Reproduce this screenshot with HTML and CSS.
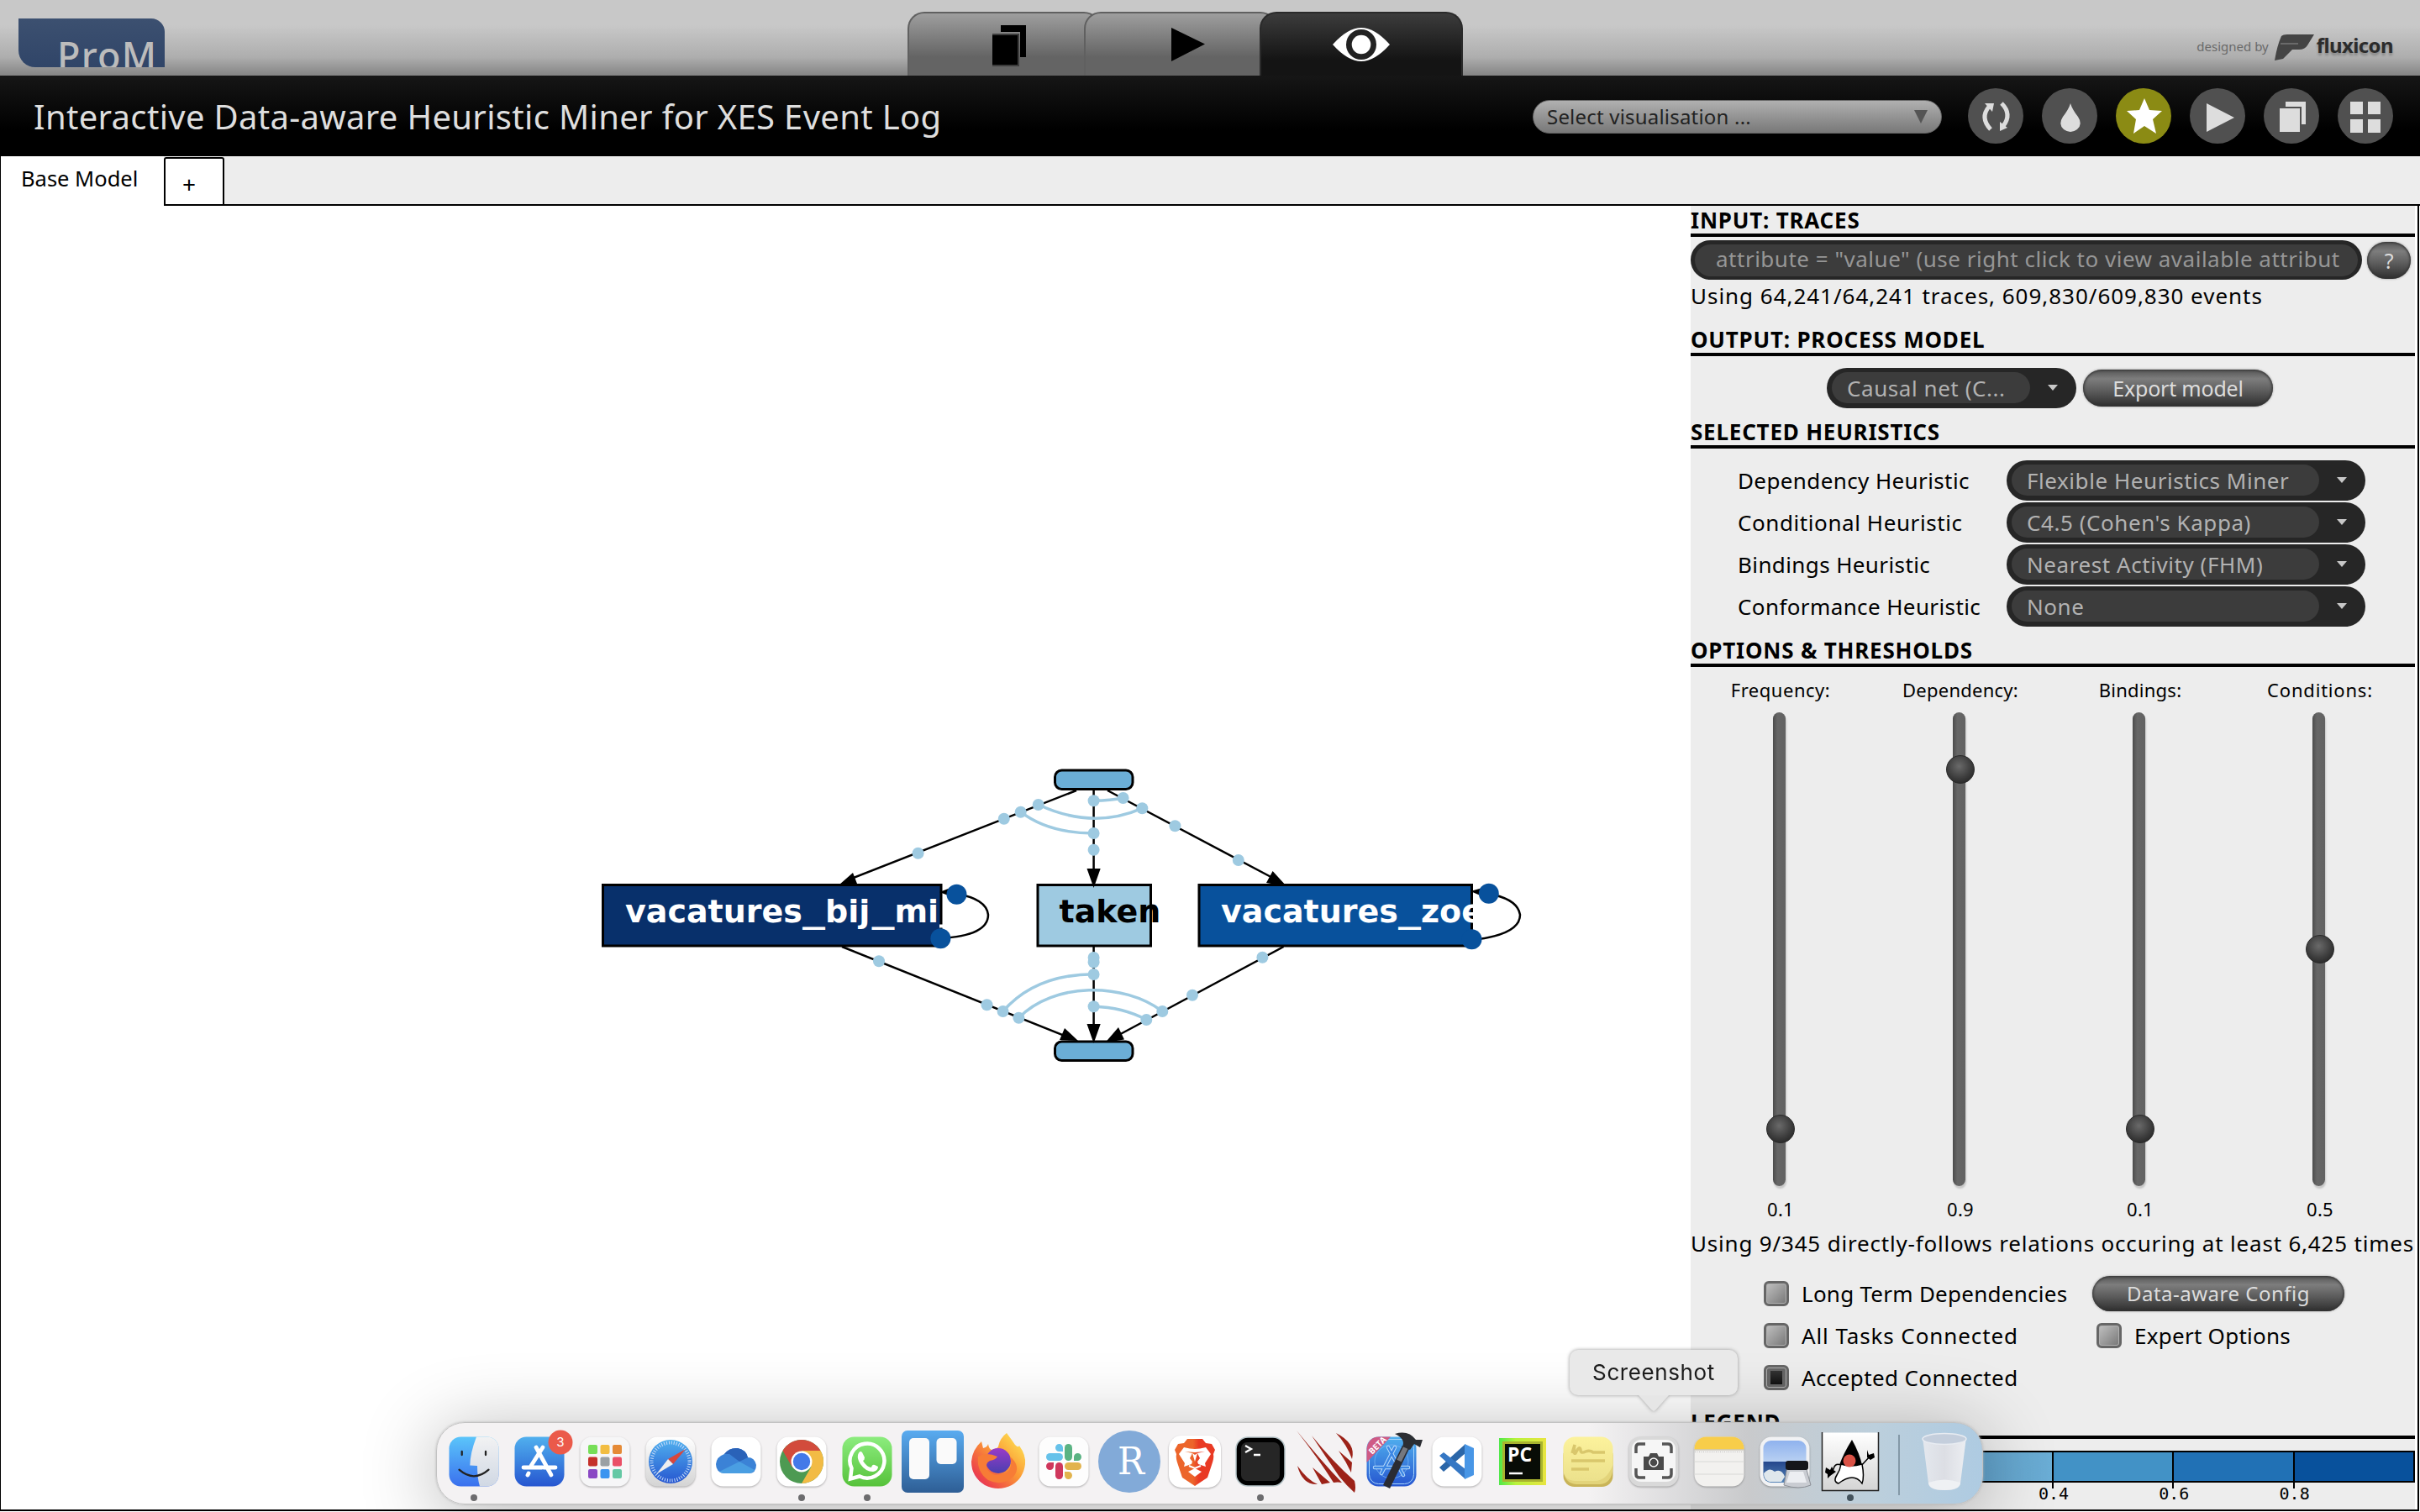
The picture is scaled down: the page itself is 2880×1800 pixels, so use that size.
FILE: index.html
```html
<!DOCTYPE html>
<html lang="en">
<head>
<meta charset="utf-8">
<title>ProM</title>
<link rel="stylesheet" href="styles.css">
</head>
<body>
<header class="topbar">
  <div class="logo"><span>ProM</span></div>
  <nav class="views">
    <div class="view"><svg width="44" height="50" viewBox="0 0 44 50"><path d="M12 1h30v38h-7V9H12z"/><path d="M2 11h32v39H2z" fill="#3c3c3c"/><path d="M2 13h30v35H2z"/></svg></div>
    <div class="view view-play"><svg width="42" height="42" viewBox="0 0 42 42"><path d="M1 1L41 20.500L1 41z"/></svg></div>
    <div class="view view-active"><svg width="70" height="44" viewBox="-35 -22 70 44"><path d="M-34 0Q-16-20 0-20Q16-20 34 0Q16 20 0 20Q-16 20-34 0z" fill="#fff"/><circle r="18" fill="#222"/><circle r="11.300" fill="#fff"/></svg></div>
  </nav>
  <div class="credit">
    <span class="credit-by">designed by</span>
    <svg width="50" height="34" viewBox="0 0 50 34"><path d="M9 3Q11 1 16 1H48L40 14Q37 19 30 19H22L11 30L1 32Q4 14 9 3z" fill="#444"/><path d="M8 12H29" stroke="#777" stroke-width="1.500"/></svg>
    <span class="credit-name">fluxicon</span>
  </div>
</header>
<div class="titlebar">
  <h1>Interactive Data-aware Heuristic Miner for XES Event Log</h1>
  <div class="vis-select"><span>Select visualisation ...</span><svg width="16" height="16" viewBox="0 0 16 16"><path d="M0 0H16L8 16z" fill="#555"/></svg></div>
  <div class="actions">
    <div class="round"><svg viewBox="-33 -33 66 66"><g fill="none" stroke="#ddd" stroke-width="5"><path d="M-6 16Q-19 2-8-11"/><path d="M7-15Q20-2 9 12"/></g><path d="M-13-15L-2-15L-4-5zM5 18L5 7L14 14z" fill="#ddd"/></svg></div>
    <div class="round"><svg viewBox="-33 -33 66 66"><path d="M1-15Q3-8 10 1Q16 10 9 16Q1 22-7 16Q-14 10-8 1Q-1-8 1-15z" fill="#ddd"/></svg></div>
    <div class="round round-star"><svg viewBox="-33 -33 66 66"><path d="M1-21L7-7L22-6L11 4L15 21L1 12L-12 21L-9 4L-20-6L-5-7z" fill="#fff"/></svg></div>
    <div class="round"><svg viewBox="-33 -33 66 66"><path d="M-13-15L20 2L-13 19z" fill="#ddd"/></svg></div>
    <div class="round"><svg viewBox="-33 -33 66 66"><path d="M-7-17H17V10H12V-11H-7z" fill="#ddd"/><path d="M-14-9H10V19H-14z" fill="#ddd"/></svg></div>
    <div class="round"><svg viewBox="-33 -33 66 66"><path d="M-18-17H-3V-2H-18zM3-17H18V-2H3zM-18 4H-3V20H-18zM3 4H18V20H3z" fill="#ddd"/></svg></div>
  </div>
</div>
<div class="tabs">
  <div class="tab tab-base">Base Model</div>
  <div class="tab tab-add">+</div>
  <div class="tab-fill"></div>
</div>
<main class="workspace">
  <svg class="graph" viewBox="1 245 2011 1552">
    <g fill="none" stroke="#000" stroke-width="2.500">
      <path d="M1281 941L1008 1048M1002 1127L1272 1235M1301.600 941V1045M1301.600 1127V1230M1318 941L1522 1049M1527.600 1127L1326 1235"/>
    </g>
    <g fill="#6baed6" stroke="#000" stroke-width="3">
      <rect x="1255.500" y="917" width="92.500" height="22.500" rx="8"/>
      <rect x="1255.500" y="1240" width="92.500" height="22.500" rx="8"/>
    </g>
    <g stroke="#000" stroke-width="3">
      <rect x="717.500" y="1053.500" width="402.500" height="72.500" fill="#08306b"/>
      <rect x="1235" y="1053.500" width="134.500" height="72.500" fill="#9ecae1"/>
      <rect x="1427" y="1053.500" width="324.500" height="72.500" fill="#08519c"/>
    </g>
    <path d="M999 1053L1015 1039L1020 1052zM1283 1239L1267 1224L1261 1238zM1301.600 1057L1293.500 1034H1309.700zM1301.600 1242L1293.500 1219H1309.700zM1531 1055L1514.600 1037L1507 1051zM1315.500 1241L1331 1223L1338 1237.500z"/>
    <g class="node-label">
      <text y="1098" fill="#fff"><tspan x="744">vacatures</tspan><tspan x="955" textLength="27" lengthAdjust="spacingAndGlyphs">_</tspan><tspan x="982">bij</tspan><tspan x="1037.500" textLength="27" lengthAdjust="spacingAndGlyphs">_</tspan><tspan x="1064.500">mi</tspan></text>
      <text x="1260.500" y="1098">taken</text>
      <text y="1098" fill="#fff"><tspan x="1453">vacatures</tspan><tspan x="1664" textLength="27" lengthAdjust="spacingAndGlyphs">_</tspan><tspan x="1691">zoe</tspan></text>
    </g>
    <path d="M1118 1100.500h5v4h-5z" fill="#fff"/>
    <g fill="none" stroke="#000" stroke-width="2.500">
      <path d="M1119 1117Q1176 1114 1176 1089Q1174 1070 1138 1064M1751 1119Q1809 1113 1809 1089Q1806 1070 1771 1064"/>
    </g>
    <path d="M1118 1062L1131 1057V1067zM1750 1061L1764 1057V1067z"/>
    <g fill="none" stroke="#9ecae1" stroke-width="3.500">
      <path d="M1236 958Q1300 988 1359 962.300M1214.700 966.700Q1248 992 1301.600 992M1301.600 953.300Q1322 953 1336.600 950"/>
      <path d="M1193.600 1204Q1232 1160 1301.600 1159.700M1212.400 1211.700C1254 1169 1337 1169 1383.300 1204M1301.600 1198.300Q1336 1199 1364.300 1214"/>
    </g>
    <g fill="#9ecae1">
      <circle cx="1235.700" cy="958" r="7"/><circle cx="1214.700" cy="966.700" r="7"/><circle cx="1194.800" cy="974.700" r="7"/><circle cx="1092.600" cy="1015.700" r="7"/>
      <circle cx="1046" cy="1144.300" r="7"/><circle cx="1174.500" cy="1196.300" r="7"/><circle cx="1193.600" cy="1204" r="7"/><circle cx="1212.400" cy="1211.700" r="7"/>
      <circle cx="1301.600" cy="953.300" r="7"/><circle cx="1301.600" cy="992" r="7"/><circle cx="1301.600" cy="1011.700" r="7"/>
      <circle cx="1301.600" cy="1140" r="7"/><circle cx="1301.600" cy="1145.500" r="7"/><circle cx="1301.600" cy="1160" r="7"/><circle cx="1301.600" cy="1198.300" r="7"/>
      <circle cx="1336.600" cy="950" r="7"/><circle cx="1359.300" cy="962.300" r="7"/><circle cx="1398.400" cy="983.300" r="7"/><circle cx="1473.800" cy="1024" r="7"/>
      <circle cx="1502.400" cy="1139.700" r="7"/><circle cx="1419" cy="1184.700" r="7"/><circle cx="1383.300" cy="1204" r="7"/><circle cx="1364.300" cy="1214" r="7"/>
    </g>
    <g fill="#08519c">
      <circle cx="1119.400" cy="1117.300" r="12"/><circle cx="1138.500" cy="1064.700" r="12"/><circle cx="1751.500" cy="1118.300" r="12"/><circle cx="1771.800" cy="1063.700" r="12"/>
    </g>
  </svg>
  <aside class="panel">
    <h2 class="heading">INPUT: TRACES</h2>
    <div class="filter-row">
      <div class="filter"><span>attribute = "value" (use right click to view available attribut</span></div>
      <div class="btn btn-help">?</div>
    </div>
    <p class="info info-traces">Using 64,241/64,241 traces, 609,830/609,830 events</p>
    <h2 class="heading heading-output">OUTPUT: PROCESS MODEL</h2>
    <div class="output-row">
      <div class="combo combo-output"><span class="combo-value">Causal net (C...</span><i class="arrow"></i></div>
      <div class="btn btn-export">Export model</div>
    </div>
    <h2 class="heading heading-next">SELECTED HEURISTICS</h2>
    <div class="heuristics">
      <span class="ls-a">Dependency Heuristic</span><div class="combo"><span class="combo-value">Flexible Heuristics Miner</span><i class="arrow"></i></div>
      <span class="ls-b">Conditional Heuristic</span><div class="combo"><span class="combo-value">C4.5 (Cohen's Kappa)</span><i class="arrow"></i></div>
      <span class="ls-a">Bindings Heuristic</span><div class="combo"><span class="combo-value">Nearest Activity (FHM)</span><i class="arrow"></i></div>
      <span class="ls-a">Conformance Heuristic</span><div class="combo"><span class="combo-value">None</span><i class="arrow"></i></div>
    </div>
    <h2 class="heading heading-next">OPTIONS &amp; THRESHOLDS</h2>
    <div class="sliders">
      <div class="slider"><span class="ls-b">Frequency:</span><div class="track"><i class="knob" style="top:479px"></i></div><span>0.1</span></div>
      <div class="slider"><span>Dependency:</span><div class="track"><i class="knob" style="top:51px"></i></div><span>0.9</span></div>
      <div class="slider"><span>Bindings:</span><div class="track"><i class="knob" style="top:479px"></i></div><span>0.1</span></div>
      <div class="slider"><span class="ls-c">Conditions:</span><div class="track"><i class="knob" style="top:265px"></i></div><span>0.5</span></div>
    </div>
    <p class="info info-relations">Using 9/345 directly-follows relations occuring at least 6,425 times</p>
    <div class="checks">
      <label class="check"><i class="box"></i><span>Long Term Dependencies</span></label><div class="btn btn-config">Data-aware Config</div>
      <label class="check"><i class="box"></i><span class="ls-c">All Tasks Connected</span></label><label class="check check-expert"><i class="box"></i><span>Expert Options</span></label>
      <label class="check"><i class="box box-on"></i><span class="ls-a">Accepted Connected</span></label>
    </div>
    <h2 class="heading heading-legend">LEGEND</h2>
    <div class="legend">
      <div class="seg seg-0"></div><div class="seg seg-1"></div><div class="seg seg-2"></div><div class="seg seg-3"><b>0.4</b></div><div class="seg seg-4"><b>0.6</b></div><div class="seg seg-5"><b>0.8</b></div>
    </div>
  </aside>
</main>

<div class="dock">
  <svg class="app" viewBox="-39 -40 78 80">
    <defs>
      <linearGradient id="blue" x2="0" y2="1"><stop stop-color="#5bc5fa"/><stop offset="1" stop-color="#3a70ee"/></linearGradient>
      <linearGradient id="store" x2="0" y2="1"><stop stop-color="#50b0ee"/><stop offset="1" stop-color="#2656d0"/></linearGradient>
      <linearGradient id="face" x2="0" y2="1"><stop stop-color="#f2f2f3"/><stop offset="1" stop-color="#d0d8e4"/></linearGradient>
      <linearGradient id="pale" x2="0" y2="1"><stop stop-color="#fff"/><stop offset="1" stop-color="#d4d4d4"/></linearGradient>
      <linearGradient id="green" x2="0" y2="1"><stop stop-color="#8cec7e"/><stop offset="1" stop-color="#56c23a"/></linearGradient>
      <linearGradient id="trello" x2="0" y2="1"><stop stop-color="#59abf0"/><stop offset="1" stop-color="#2e5e95"/></linearGradient>
      <linearGradient id="fox" x1="1" y1="0" x2="0" y2="1"><stop stop-color="#fff25a"/><stop offset=".45" stop-color="#fb9a35"/><stop offset=".8" stop-color="#ee4548"/><stop offset="1" stop-color="#d8257c"/></linearGradient>
      <linearGradient id="orb" x2="0" y2="1"><stop stop-color="#9a3bc8"/><stop offset="1" stop-color="#4a3fb0"/></linearGradient>
      <linearGradient id="brave"><stop offset=".45" stop-color="#ec652b"/><stop offset=".6" stop-color="#e93a24"/></linearGradient>
      <linearGradient id="charm"><stop stop-color="#4fe84a"/><stop offset=".35" stop-color="#b8f23c"/><stop offset="1" stop-color="#e8e540"/></linearGradient>
      <linearGradient id="sticky" x2="0" y2="1"><stop stop-color="#fcf29c"/><stop offset="1" stop-color="#ece18c"/></linearGradient>
      <linearGradient id="sky" x2="0" y2="1"><stop stop-color="#8fb2ee"/><stop offset=".5" stop-color="#b8d0f2"/><stop offset=".5" stop-color="#24468c"/><stop offset="1" stop-color="#5585b8"/></linearGradient>
      <linearGradient id="glass"><stop stop-color="#e4e8ee"/><stop offset=".5" stop-color="#dcdee4"/><stop offset="1" stop-color="#eceef2"/></linearGradient>
    </defs>
    <rect x="-29.500" y="-29.500" width="59" height="59" rx="14" fill="url(#blue)"/>
    <path d="M3-29.500Q-4.500-10-4.700 4.500L4 5Q4 20 7 29.500H15.500A14 14 0 0 0 29.500 15.500V-15.500A14 14 0 0 0 15.500-29.500z" fill="url(#face)"/>
    <path d="M-14.300-12V-8M14-12V-8M-17.500 9.700Q0 25 17.500 9.700" fill="none" stroke="#222" stroke-width="2.300" stroke-linecap="round"/>
    <circle cy="43" r="4"/>
  </svg>
  <svg class="app" viewBox="-39 -40 78 80"><rect x="-29.500" y="-29.500" width="59" height="59" rx="14" fill="url(#store)"/><path d="M4-17L-10 5M-4-17L14 16M-19 7H-4M5 7H19M-13 14L-14 16M-8 7H3" stroke="#fff" stroke-width="4.800" stroke-linecap="round"/><circle cx="25" cy="-23" r="14.500" fill="#eb5a4a"/><text x="25" y="-18" text-anchor="middle" class="badge">3</text></svg>
  <svg class="app" viewBox="-39 -40 78 80"><rect x="-29.500" y="-29.500" width="59" height="59" rx="14" fill="#f6f6f7" class="lift"/><g><rect x="-20" y="-20" width="11" height="11" rx="2" fill="#76de58"/><rect x="-5.500" y="-20" width="11" height="11" rx="2" fill="#f2bd42"/><rect x="9" y="-20" width="11" height="11" rx="2" fill="#e58a36"/><rect x="-20" y="-5.500" width="11" height="11" rx="2" fill="#c5302a"/><rect x="-5.500" y="-5.500" width="11" height="11" rx="2" fill="#9aa0a4"/><rect x="9" y="-5.500" width="11" height="11" rx="2" fill="#ea4f66"/><rect x="-20" y="9" width="11" height="11" rx="2" fill="#8a48c4"/><rect x="-5.500" y="9" width="11" height="11" rx="2" fill="#3a94f0"/><rect x="9" y="9" width="11" height="11" rx="2" fill="#64c8a4"/></g></svg>
  <svg class="app" viewBox="-39 -40 78 80"><rect x="-29.500" y="-29.500" width="59" height="59" rx="14" fill="url(#pale)" class="lift"/><circle r="26" fill="url(#store)"/><circle r="22.500" fill="none" stroke="#c8dcf8" stroke-width="4" stroke-dasharray="1 1.950"/><path d="M18-15L3 3L-3-3z" fill="#d9463c"/><path d="M-17 15L-3-3L3 3z" fill="#eee"/></svg>
  <svg class="app" viewBox="-39 -40 78 80"><rect x="-29.500" y="-29.500" width="59" height="59" rx="14" fill="#fff" class="lift"/><path d="M-14-9Q-8-17 2-16Q12-14 14-5Q22-5 24 4Q24 14 15 14H-14Q-24 13-24 3Q-23-6-14-9z" fill="#3b82d6"/><path d="M-14-9Q-8-17 2-16Q12-14 14-5L4 0L-8-9z" fill="#2a62b8"/><path d="M-20 12L4 0L22 10Q19 14 14 14H-14Q-18 14-20 12z" fill="#4a9ee2"/></svg>
  <svg class="app" viewBox="-39 -40 78 80"><rect x="-29.500" y="-29.500" width="59" height="59" rx="14" fill="#fff" class="lift"/><circle r="26" fill="#4d9a52"/><path d="M0-13H22.500A26 26 0 0 1 0 26L11.300 6.500z" fill="#f2bb45"/><path d="M-22.500-13A26 26 0 0 1 22.500-13H0L-11.300 6.500z" fill="#d24b3c"/><circle r="12.500" fill="#fff"/><circle r="10.200" fill="#4379e8"/><circle cy="43" r="4"/></svg>
  <svg class="app" viewBox="-39 -40 78 80"><rect x="-29.500" y="-29.500" width="59" height="59" rx="14" fill="url(#green)"/><path d="M-18.500 8A20.500 20.500 0 1 1-9 17.500L-20 20.500z" fill="none" stroke="#fff" stroke-width="4.500"/><path d="M-11-8Q-9-14-6-11L-3-5Q-3-2-5-1Q-1 6 5 7Q6 3 9 4L13 6Q13 11 7 12Q-2 12-8 3Q-12-3-11-8z" fill="#fff"/><circle cy="43" r="4"/></svg>
  <svg class="app" viewBox="-39 -40 78 80"><rect x="-37" y="-37" width="74" height="74" rx="7" fill="url(#trello)"/><rect x="-28" y="-28" width="24" height="49" rx="5" fill="#fafafa"/><rect x="4.500" y="-28" width="24" height="31" rx="5" fill="#fafafa"/></svg>
  <svg class="app" viewBox="-39 -40 78 80"><path d="M10-34Q16-26 20-20Q24-16 25-19Q33-8 32 3Q30 20 16 28Q0 36-16 28Q-32 18-32 0Q-31-14-20-24L-18-16Q-13-17-12-21Q-11-15-8-14Q0-16 0-18Q2-28 10-34z" fill="url(#fox)"/><circle cx="0" cy="-1" r="15" fill="url(#orb)"/><path d="M-24-6Q-14-12-1-6Q-3-2-10-1Q-16 2-13 9Q-5 20 8 14Q18 8 14-6Q28 6 18 18Q4 30-12 22Q-26 12-24-6z" fill="#f77c36"/></svg>
  <svg class="app" viewBox="-39 -40 78 80"><rect x="-29.500" y="-29.500" width="59" height="59" rx="14" fill="#fdfdfd" class="lift"/><g fill="#66c2ea"><rect x="-21" y="-10" width="20" height="9" rx="4.500"/><path d="M-1-12H-5.500A4.500 4.500 0 1 1-1-16.500z"/></g><g fill="#5ab383"><rect x="1" y="-21" width="9" height="20" rx="4.500"/><path d="M12-1V-5.500A4.500 4.500 0 1 1 16.500-1z"/></g><g fill="#cf375c"><rect x="-10" y="1" width="9" height="20" rx="4.500"/><path d="M-12 1V5.500A4.500 4.500 0 1 1-16.500 1z"/></g><g fill="#e2b34c"><rect x="1" y="1" width="20" height="9" rx="4.500"/><path d="M1 12H5.500A4.500 4.500 0 1 1 1 16.500z"/></g></svg>
  <svg class="app" viewBox="-39 -40 78 80"><circle r="37" fill="#82aad8"/><text x="-14" y="15" textLength="32" lengthAdjust="spacingAndGlyphs" class="r-mark">R</text></svg>
  <svg class="app" viewBox="-39 -40 78 80"><rect x="-31" y="-31" width="62" height="62" rx="15" fill="#fff" class="lift"/><path d="M-9-27H9L13-22L20-21L24-14L22-9Q23-4 20 4L15 19L0 29L-15 19L-20 4Q-23-4-22-9L-24-14L-20-21L-13-22z" fill="url(#brave)"/><path d="M-13-17Q-6-15 0-15Q6-15 13-17L19-9L12 2L13 6L4 3L3 0L6-4L3-10L12-12L0-11L-12-12L-3-10L-6-4L-3 0L-4 3L-13 6L-12 2L-19-9zM0 8L8 12L0 18L-8 12zM-3-10L0 0L3-10L0-8z" fill="#fff"/><path d="M-7 5L0 8L7 5" stroke="#fff" stroke-width="2" fill="none"/></svg>
  <svg class="app" viewBox="-39 -40 78 80"><rect x="-29" y="-29" width="58" height="58" rx="14" fill="#000" stroke="#b5c4c8" stroke-width="1.500"/><rect x="-23" y="-23" width="46" height="46" rx="7" fill="#262626"/><path d="M-18-19L-11-15L-18-11M-8-8H0" fill="none" stroke="#fff" stroke-width="2.300"/><circle cy="43" r="4"/></svg>
  <svg class="app" viewBox="-39 -40 78 80"><path d="M-35-37Q-5 0 19 25Q14 24 9 25Q-8-2-35-37zM-17-31Q8 0 34 23Q36 31 34 37Q24 28 16 18Q0-5-17-31zM12-34Q36-22 31-3Q25-20 12-34zM15-13L31 1L30 13Q24 0 15-13zM-34 5Q-22 22-10 27Q-28 28-34 5zM-16 7L5 25L-5 27z" fill="#9c2218"/></svg>
  <svg class="app" viewBox="-39 -40 78 80"><rect x="-29.500" y="-29.500" width="59" height="59" rx="14" fill="url(#store)"/><rect x="-26.500" y="-26.500" width="53" height="53" rx="11" fill="none" stroke="#a5d4fa" stroke-width="1"/><circle r="20" fill="none" stroke="#76b4f2" stroke-width=".8"/><path d="M4-17L-12 14M-4-17L14 16M-20 7H20" stroke="#b9dcfb" stroke-width="4.500" stroke-linecap="round"/><path d="M4-17L-12 14M-4-17L14 16M-20 7H20" stroke="#3b86e4" stroke-width="2.500" stroke-linecap="round"/><path d="M-29.500 1V-15Q-28-29-15-29.500H-1z" fill="#cf5a85"/><text class="beta" transform="translate(-23 -8) rotate(-45)">BETA</text><path d="M17-17L-6 30" stroke="#2a2c33" stroke-width="9"/><path d="M18-19L9-1" stroke="#75787f" stroke-width="6"/><path d="M4-33Q20-38 29-26L37-26L34-17L27-21L22-14L13-18Q17-27 4-33z" fill="#2c2e33"/></svg>
  <svg class="app" viewBox="-39 -40 78 80"><rect x="-29.500" y="-29.500" width="59" height="59" rx="14" fill="#fff" class="lift"/><path d="M-21 7L10-21V-10L-16 12z" fill="#2b66a8"/><path d="M-21-7L-16-11L10 9V21z" fill="#3577c4"/><path d="M9-21L20-16V16L9 21z" fill="#4896e6"/></svg>
  <svg class="app" viewBox="-39 -40 78 80"><rect x="-28" y="-28" width="56" height="56" fill="url(#charm)"/><rect x="-24" y="-24" width="48" height="48" fill="#a8b32e"/><rect x="-21" y="-21" width="42" height="42" fill="#080c06"/><text x="-18" y="0" class="pc">PC</text><path d="M-16 14H0" stroke="#fff" stroke-width="2.500"/></svg>
  <svg class="app" viewBox="-39 -40 78 80"><rect x="-29.500" y="-20" width="59" height="50" rx="13" fill="#c9b458"/><path d="M-29.500 10Q-28 26-14 27H14Q28 26 29.500 8V-10H-29.500z" fill="#e3d47a"/><path d="M-29.500-15.500A14 14 0 0 1-15.500-29.500H15.500A14 14 0 0 1 29.500-15.500V4Q22 23 8 23H-16Q-29 22-29.500 10z" fill="url(#sticky)"/><path d="M-19-10L-16-20Q-18-8-15-10Q-10-20-9-14Q-9-9-3-12Q2-14 6-11H20M-20-1H20M-20 9H1" fill="none" stroke="#d9c76c" stroke-width="3.500"/></svg>
  <svg class="app" viewBox="-39 -40 78 80"><rect x="-29.500" y="-29.500" width="59" height="59" rx="14" fill="#d9d9d9" class="lift"/><rect x="-26" y="-26" width="52" height="50" rx="11" fill="#f6f6f6"/><path d="M-21-10V-17Q-21-21-17-21H-10M10-21H17Q21-21 21-17V-10M21 8V15Q21 19 17 19H10M-10 19H-17Q-21 19-21 15V8" fill="none" stroke="#555" stroke-width="3.500"/><path d="M-12-6H-6L-4-10H4L6-6H12V10H-12z" fill="#4a4a4a"/><circle cy="1" r="5" fill="#4a4a4a" stroke="#fff" stroke-width="1.500"/></svg>
  <svg class="app" viewBox="-39 -40 78 80"><rect x="-29.500" y="-29.500" width="59" height="59" rx="14" fill="#f2f1ef" class="lift"/><path d="M-29.500-15.500A14 14 0 0 1-15.500-29.500H15.500A14 14 0 0 1 29.500-15.500V-14.500H-29.500z" fill="#f8cd4a"/><path d="M-29.500-14H29.500" stroke="#b9b4a4" stroke-width="1"/><path d="M-29-11.500H29" stroke="#bbb" stroke-width="1.200" stroke-dasharray="1 1.500"/><path d="M-29.500 0H29.500M-29.500 15H29.500" stroke="#d8d8d6" stroke-width="1"/></svg>
  <svg class="app" viewBox="-39 -40 78 80"><rect x="-29.500" y="-29.500" width="59" height="59" rx="14" fill="#f1f2f4" class="lift"/><rect x="-25.500" y="-25" width="51" height="50" rx="9" fill="url(#sky)"/><path d="M-25 14Q-18 6-12 12Q-4 8 0 18L-4 24H-18Q-25 22-25 14z" fill="#dfe7ec"/><path d="M3 6H25L31 28Q17 34-1 28z" fill="#c9ccd2" stroke="#8b8f96" stroke-width="1"/><path d="M6 12H22L26 25H2z" fill="#eceef2"/><rect x="1" y="-1" width="27" height="11" rx="3" fill="#15161a"/></svg>
  <svg class="app" viewBox="-39 -40 78 80"><rect x="-33.500" y="-34.500" width="67" height="69" rx="1" fill="url(#pale)"/><path d="M-33.500-35V34.500H33.500V-35" fill="none" stroke="#222" stroke-width="1.500"/><path d="M-9 5Q-18 0-20 9L-26 13M12 6L24-7" fill="none" stroke="#000" stroke-width="1.500"/><path d="M-29 7L-24 10L-22 6L-20 10L-17 12L-24 17L-27 20L-27 15L-30 13zM20-14L22-8L28-10L29-5L24-2L20-5z"/><path d="M2-26Q11-10 14 4H-13Q-8-10 2-26z"/><path d="M-11 3Q0 7 14 3Q17 18 14 26Q4 12-14 26Q-21 24-16 16Q-12 10-11 3z" fill="#fff" stroke="#000" stroke-width="1.500"/><circle cx="-1" cy="-1" r="7.500" fill="#da5246"/><circle cy="43" r="4" fill="#43525c"/></svg>
  <i class="dock-line"></i>
  <svg class="app app-trash" viewBox="-39 -40 78 80"><path d="M-26-29L-19 26Q-18 34 0 34Q18 34 19 26L26-29z" fill="url(#glass)"/><ellipse cy="-27" rx="26" ry="6.500" fill="#c4cedc" stroke="#e8ecf2" stroke-width="1.500"/><path d="M-19 25Q0 18 19 25Q18 34 0 34Q-18 34-19 25z" fill="#eff1f4"/></svg>
</div>
<div class="tooltip">Screenshot</div>
</body>
</html>
```
FILE: styles.css
```css
* { box-sizing: border-box; }
body {
  margin: 0; width: 2880px; height: 1800px; overflow: hidden; position: relative;
  display: flex; flex-direction: column;
  background: #fff; color: #000;
  font: 26px/32px "Noto Sans", sans-serif;
}
h1, h2, p { margin: 0; font-weight: 400; }
svg { display: block; }

.topbar {
  height: 90px; flex: none; display: grid; grid-template-columns: 1080px 661px 1fr; align-items: end;
  background: linear-gradient(#c8c8c8 0, #c8c8c8 30px, #aeaeae 68px, #848484 90px);
}
.logo {
  width: 174px; height: 58px; margin: 0 0 10px 22px; padding-left: 46px; overflow: hidden;
  background: linear-gradient(#3c5070, #304568); border-radius: 0 16px 0 20px;
  color: #bcbcbc; font-size: 45px; font-weight: 500; line-height: 60px; letter-spacing: 1.2px;
}
.logo span { display: block; padding-top: 14px; }
.views { display: flex; }
.view {
  width: 230px; height: 76px; margin-right: -20.500px; flex: none; padding: 13px 0 0 97px;
  border: 2px solid #606060; border-bottom: 0; border-radius: 20px 20px 0 0;
  background: linear-gradient(#9e9e9e, #646464 52px);
}
.view-play { padding: 16px 0 0 101px; }
.view-active { width: 242px; margin: 0; padding: 15px 0 0 84px; border-color: #2a2a2a; background: linear-gradient(#3c3c3c, #141414 55px); }
.credit { display: flex; justify-content: flex-end; align-items: center; height: 76px; padding: 0 32px 0 0; }
.credit svg { margin-top: 9px; }
.credit-by { font-size: 15px; color: #6a6a6a; margin: 5px 6px 0 0; }
.credit-name { font-size: 24px; font-weight: 700; letter-spacing: -.6px; color: #2c2c2c; margin-left: 1px; text-shadow: 0 3px 3px rgba(0,0,0,.25); padding-top: 3px; }

.titlebar {
  height: 96px; flex: none; display: flex; align-items: center; padding: 0 32px 0 40px;
  background: linear-gradient(#161616, #000 65px);
}
.titlebar h1 { flex: 1; padding-top: 2px; font-size: 40px; line-height: 54px; letter-spacing: .32px; color: #dedede; }
.vis-select {
  width: 487px; height: 40px; margin: 2px 31px 0 0; padding: 0 16px; border-radius: 20px;
  display: flex; align-items: center; justify-content: space-between;
  background: linear-gradient(#b0b0b0, #787878); border: 1px solid #666;
  font-size: 24px; letter-spacing: .2px; color: #222;
}
.actions { display: flex; gap: 22px; }
.round { width: 66px; height: 66px; border-radius: 50%; background: #505050; }
.round-star { background: #8b8b14; }

.tabs { height: 59px; flex: none; display: flex; background: #ededed; }
.tab-base { width: 195px; padding: 10px 0 0 24px; background: #fff; font-size: 25.500px; border-left: 1px solid #000; }
.tab-add { width: 72px; margin-top: 1px; padding: 14px 0 0 20px; background: #fff; border: 2px solid #000; border-radius: 3px 3px 0 0; font-size: 28px; }
.tab-fill { flex: 1; border-bottom: 2px solid #000; }

.workspace { height: 1554px; flex: none; display: flex; border: solid #000; border-width: 0 2px 2px 1px; margin-right: 1px; }
.graph { width: 2011px; height: 1552px; flex: none; }
.node-label { font: 700 38px "DejaVu Sans", sans-serif; }

.panel { width: 862px; padding-top: 1px; background: #ededed; white-space: nowrap; }
.heading { height: 36px; border-bottom: 4px solid #000; font-size: 26px; font-weight: 700; letter-spacing: .79px; }
.heading-output { margin-top: 20px; }
.heading-next { margin-top: 12px; }
.heading-legend { margin-top: 11px; }
.filter-row { display: flex; margin-top: 4px; gap: 6px; }
.filter {
  width: 799px; height: 47px; padding: 0 27px 0 25px; border: 5px solid #262626; border-bottom-width: 4px; border-radius: 24px;
  background: #3c3c3c; color: #969696; line-height: 35px; letter-spacing: .51px; overflow: hidden;
}
.btn {
  height: 44px; border-radius: 22px; text-align: center; color: #dcdcdc; font-size: 25px; line-height: 44px; letter-spacing: -.2px;
  background: linear-gradient(#555, #7d7d7d 25%, #5a5a5a 60%, #2e2e2e);
  box-shadow: inset 0 0 3px 1px #333, 0 0 2px 1px #c4c4c4;
}
.btn-help { width: 52px; margin-top: 2px; }
.info { height: 32px; }
.info-traces { margin-top: 3px; letter-spacing: .97px; }
.info-relations { margin-top: 11px; letter-spacing: .81px; }
.output-row { display: flex; margin: 14px 0 0 162px; gap: 8px; }
.btn-export { width: 226px; margin-top: 2px; }
.combo {
  width: 427px; height: 48px; padding: 5px 22px 6px 6px; border-radius: 24px; background: #262626;
  display: flex; align-items: center; justify-content: space-between;
}
.combo-value { width: 366px; height: 37px; padding-left: 18px; border-radius: 19px; background: #3c3c3c; color: #b2b2b2; line-height: 38px; letter-spacing: .56px; }
.combo-output { width: 297px; }
.combo-output .combo-value { width: 236px; }
.arrow { border: solid transparent; border-width: 7px 6px 0; border-top-color: #c8c8c8; }
.heuristics { display: grid; grid-template-columns: 320px 427px; gap: 2px 0; align-items: center; margin: 14px 0 0 56px; }
.ls-a { letter-spacing: .39px; }
.ls-b { letter-spacing: .58px; }
.ls-c { letter-spacing: .9px; }

.sliders { display: grid; grid-template-columns: repeat(4, 214px); margin-top: 13px; font-size: 22px; line-height: 28px; }
.slider { display: flex; flex-direction: column; align-items: center; }
.slider > span { letter-spacing: .25px; }
.slider > .ls-b { letter-spacing: .52px; }
.slider > .ls-c { letter-spacing: .8px; }
.track {
  position: relative; width: 15px; height: 564px; margin: 13px 4px 13px 0; border-radius: 8px;
  background: linear-gradient(90deg, #4c4c4c, #666 35%, #626262); box-shadow: 1px 3px 2px #c6c6c6;
}
.knob { position: absolute; left: -8px; width: 34px; height: 34px; border-radius: 50%; background: radial-gradient(circle at 45% 38%, #6a6a6a, #3c3c3c 55%, #1a1a1a); border: 1px solid #2a2a2a; }

.checks { display: grid; grid-template-columns: 391px 300px; grid-auto-rows: 50px; align-items: center; margin: 19px 0 0 87px; }
.check { display: flex; align-items: center; gap: 15px; letter-spacing: .26px; }
.check-expert { padding-left: 5px; }
.box { width: 30px; height: 30px; border-radius: 6px; background: linear-gradient(135deg, #c0c0c0, #777); border: 3px solid #666; box-shadow: 0 0 0 1px #b0b0b0 inset; }
.box-on { background: linear-gradient(#333, #111) center/14px 16px no-repeat, #666; }
.btn-config { height: 42px; line-height: 42px; font-size: 24px; letter-spacing: .5px; }
.heading-legend { margin-top: 12px; }

.legend { height: 38px; display: flex; margin-top: 14px; border: 2px solid #000; }
.seg { position: relative; flex: 1; border-left: 2px solid #000; }
.seg:first-child { border-left: 0; }
.seg b { position: absolute; left: -20px; top: 36px; width: 40px; text-align: center; font: 20px/26px "DejaVu Sans Mono", monospace; }
.seg b::before { content: ""; position: absolute; left: 18px; top: -2px; width: 2px; height: 9px; background: #000; }
.seg-0 { background: #eff3ff; }
.seg-1 { background: #c6dbef; }
.seg-2 { background: linear-gradient(90deg, #5b98c0, #6baed6); }
.seg-3 { background: #4292c6; }
.seg-4 { background: #2171b5; }
.seg-5 { background: #08519c; }

.dock {
  position: absolute; left: 519px; top: 1693px; width: 1841px; height: 98px; padding: 6px 0 0 5px;
  display: flex; border-radius: 34px; border: 1px solid #c2c2c2;
  background: linear-gradient(90deg, #f4f2f3 0, #f4f2f3 1370px, #c9cacc 1560px, #bccfdc 1710px, #aecbe2 1841px);
  box-shadow: 0 0 3px #b5b5b5, 0 12px 90px rgba(0,0,0,.3);
}
.app { width: 78px; height: 80px; flex: none; overflow: visible; fill: #6c6c6e; }
.app:nth-of-type(22) { fill: #000; }
.lift { filter: drop-shadow(0 1px 1px rgba(0,0,0,.3)); }
.dock-line { width: 2px; height: 72px; margin: 8px 0 0 18px; background: #8499a8; }
.app-trash { margin-left: 14px; }
.badge { font: 15px Inter, sans-serif; fill: #fff; }
.r-mark { font: 45px "DejaVu Serif", serif; fill: #fff; }
.beta { font: 700 10px "Open Sans", sans-serif; fill: #fff; }
.pc { font: 700 23px "Open Sans", sans-serif; fill: #fff; }

.tooltip {
  position: absolute; left: 1868px; top: 1607px; width: 200px; height: 54px; border-radius: 10px;
  background: #e9e9e9; filter: drop-shadow(0 0 2px #999); text-align: center;
  font: 26px/53px Inter, sans-serif; letter-spacing: .6px; color: #1c1c1c;
}
.tooltip::after { content: ""; position: absolute; left: 82px; top: 54px; width: 36px; height: 19px; background: #e6e6e6; clip-path: polygon(0 0, 100% 0, 58% 90%, 50% 100%, 42% 90%); }
```
